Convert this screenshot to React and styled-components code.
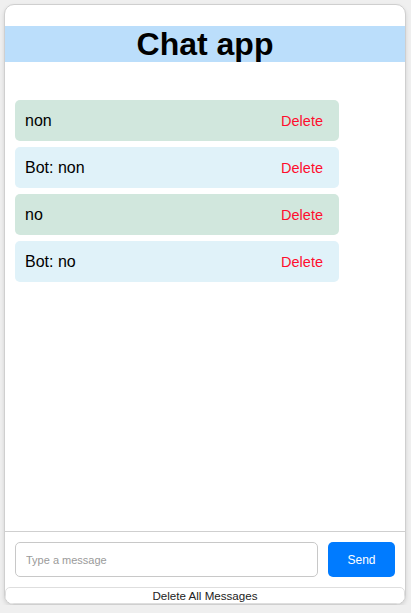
import React, { useState } from "react";
import styled, { createGlobalStyle } from "styled-components";

const Global = createGlobalStyle`
  html, body { margin: 0; padding: 0; background: #efefef; }
  body { font-family: "Liberation Sans", Arial, Helvetica, sans-serif; }
  * { box-sizing: border-box; }
`;

const Container = styled.div`
  width: 402px;
  height: 601px;
  margin: 4px 0 0 4px;
  background: #fff;
  border: 1px solid #cfcfcf;
  border-radius: 10px;
  box-shadow: 0 2px 4px rgba(0, 0, 0, 0.12);
  display: flex;
  flex-direction: column;
  overflow: hidden;
`;

const Title = styled.h1`
  margin: 21px 0;
  height: 36px;
  line-height: 36px;
  font-size: 32px;
  font-weight: bold;
  text-align: center;
  color: #000;
  background: #bbdefb;
`;

const List = styled.div`
  flex: 1;
  padding: 17px 10px 10px;
  display: flex;
  flex-direction: column;
  gap: 6px;
  overflow-y: auto;
`;

const Message = styled.div`
  width: 324px;
  height: 41px;
  padding: 0 16px 0 10px;
  border-radius: 5px;
  display: flex;
  align-items: center;
  justify-content: space-between;
  font-size: 16px;
  color: #000;
  background: ${(p) => (p.$bot ? "#e0f2f9" : "#d1e7dd")};
`;

const DeleteButton = styled.button`
  border: none;
  background: transparent;
  padding: 0;
  font-family: inherit;
  font-size: 14.5px;
  color: #ff0d2d;
  cursor: pointer;
`;

const InputRow = styled.div`
  border-top: 1px solid #cfcfcf;
  padding: 10px;
  display: flex;
  gap: 10px;
`;

const Input = styled.input`
  flex: 1;
  height: 35px;
  border: 1px solid #c8c8c8;
  border-radius: 5px;
  padding: 0 10px;
  font-family: inherit;
  font-size: 11px;
  outline: none;
  &::placeholder { color: #9a9a9a; }
`;

const SendButton = styled.button`
  width: 67px;
  height: 35px;
  border: none;
  border-radius: 5px;
  background: #007bff;
  color: #fff;
  font-family: inherit;
  font-size: 12px;
  cursor: pointer;
`;

const ClearButton = styled.button`
  height: 17px;
  width: 100%;
  border: 1px solid #dedede;
  border-radius: 5px;
  background: #fff;
  color: #222;
  font-family: inherit;
  font-size: 11.6px;
  padding: 0;
  line-height: 15px;
  cursor: pointer;
`;

const initial = [
  { id: 1, text: "non", bot: false },
  { id: 2, text: "Bot: non", bot: true },
  { id: 3, text: "no", bot: false },
  { id: 4, text: "Bot: no", bot: true },
];

export default function App() {
  const [messages, setMessages] = useState(initial);
  const [value, setValue] = useState("");
  return (
    <>
      <Global />
      <Container>
        <Title>Chat app</Title>
        <List>
          {messages.map((m) => (
            <Message key={m.id} $bot={m.bot}>
              <span>{m.text}</span>
              <DeleteButton onClick={() => setMessages(messages.filter((x) => x.id !== m.id))}>
                Delete
              </DeleteButton>
            </Message>
          ))}
        </List>
        <InputRow>
          <Input placeholder="Type a message" value={value} onChange={(e) => setValue(e.target.value)} />
          <SendButton>Send</SendButton>
        </InputRow>
        <ClearButton onClick={() => setMessages([])}>Delete All Messages</ClearButton>
      </Container>
    </>
  );
}
